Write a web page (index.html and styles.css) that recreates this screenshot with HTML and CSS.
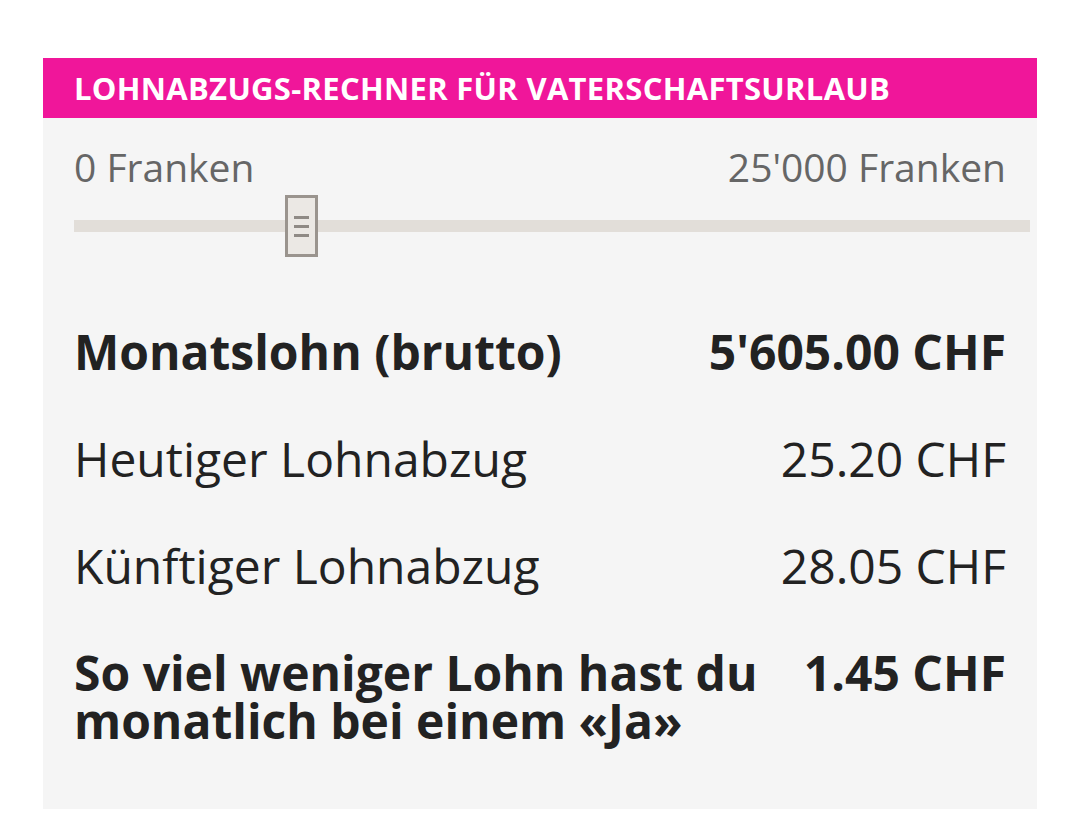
FILE: index.html
```html
<!DOCTYPE html>
<html lang="de">
<head>
    <meta charset="UTF-8">
    <meta name="viewport" content="width=device-width, initial-scale=1.0">
    <title>Lohnabzugs-Rechner</title>
    <link rel="stylesheet" href="styles.css">
</head>
<body>
    <div class="calculator">
        <div class="calc-header">Lohnabzugs-Rechner für Vaterschaftsurlaub</div>

        <div class="calc-body">
            <div class="range-labels">
                <span>0 Franken</span>
                <span>25'000 Franken</span>
            </div>

            <div class="slider">
                <div class="slider-track"></div>
                <div class="slider-thumb" style="left: 22.1%;">
                    <span></span><span></span><span></span>
                </div>
            </div>

            <div class="result-row strong">
                <span class="result-label">Monatslohn (brutto)</span>
                <span class="result-value">5'605.00 CHF</span>
            </div>
            <div class="result-row">
                <span class="result-label">Heutiger Lohnabzug</span>
                <span class="result-value">25.20 CHF</span>
            </div>
            <div class="result-row">
                <span class="result-label">Künftiger Lohnabzug</span>
                <span class="result-value">28.05 CHF</span>
            </div>
            <div class="result-row strong">
                <span class="result-label">So viel weniger Lohn hast du monatlich bei einem «Ja»</span>
                <span class="result-value">1.45 CHF</span>
            </div>
        </div>
    </div>
</body>
</html>
```

FILE: styles.css
```css
body {
    margin: 0;
    padding: 58px 43px 16px 43px;
    background-color: #ffffff;
    font-family: "Open Sans", "Noto Sans", sans-serif;
    color: #222222;
}
.calculator {
    width: 994px;
    background-color: #f5f5f5;
}
.calc-header {
    height: 60px;
    padding: 0 31px;
    background-color: #f0169a;
    color: #ffffff;
    font-size: 31px;
    font-weight: bold;
    text-transform: uppercase;
    line-height: 60px;
    letter-spacing: 0.3px;
}
.calc-body {
    padding: 24px 31px 64px 31px;
}
.range-labels {
    display: flex;
    justify-content: space-between;
    font-size: 39px;
    line-height: 50px;
    color: #666666;
}
.slider {
    position: relative;
    height: 62px;
    margin: 3px -24px 0 0;
}
.slider-track {
    position: absolute;
    left: 0;
    right: 0;
    top: 25px;
    height: 12px;
    background-color: #e2ded9;
}
.slider-thumb {
    position: absolute;
    top: 0;
    width: 27px;
    height: 56px;
    border: 3px solid #9a948e;
    background-color: #ebe8e4;
    display: flex;
    flex-direction: column;
    justify-content: center;
    align-items: center;
    gap: 6px;
}
.slider-thumb span {
    display: block;
    width: 15px;
    height: 3px;
    background-color: #8f8a85;
}
.result-row {
    display: flex;
    justify-content: space-between;
    align-items: baseline;
    gap: 40px;
    margin-top: 71px;
    font-size: 48px;
    line-height: 48px;
}
.result-row + .result-row {
    margin-top: 59px;
}
.result-row.strong {
    font-weight: bold;
}
.result-label {
    flex: 1;
}
.result-value {
    white-space: nowrap;
}
```
